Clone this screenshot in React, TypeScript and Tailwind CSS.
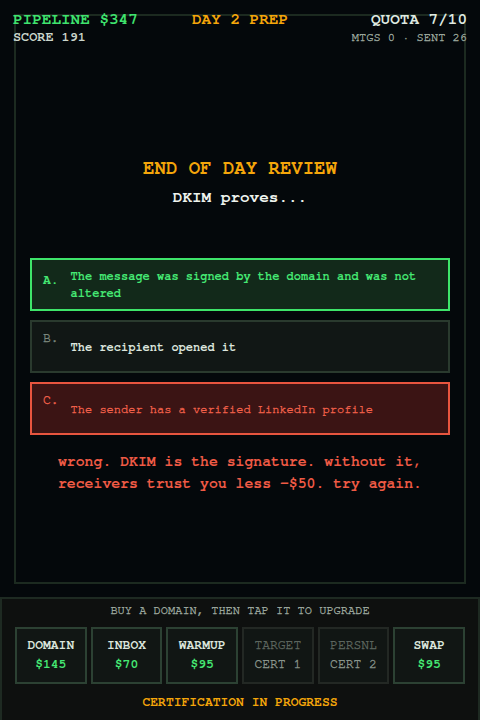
import React from "react";

const mono = "font-['FreeMono','TeX_Gyre_Cursor','Courier_New',monospace]";
const thin = "[-webkit-text-stroke:0.35px_currentColor]";

const options = [
  { key: "A.", text: "The message was signed by the domain and was not altered", state: "right" },
  { key: "B.", text: "The recipient opened it", state: "idle" },
  { key: "C.", text: "The sender has a verified LinkedIn profile", state: "wrong" },
] as const;

const shop = [
  { name: "DOMAIN", price: "$145", locked: false },
  { name: "INBOX", price: "$70", locked: false },
  { name: "WARMUP", price: "$95", locked: false },
  { name: "TARGET", price: "CERT 1", locked: true },
  { name: "PERSNL", price: "CERT 2", locked: true },
  { name: "SWAP", price: "$95", locked: false },
];

export default function App() {
  return (
    <div className={`relative h-[720px] w-[480px] overflow-hidden bg-[#04080b] ${mono}`}>
      {/* HUD */}
      <div className="absolute left-0 right-0 top-0 z-10 px-[13px] pt-[10px]">
        <div className="grid grid-cols-[1fr_auto_1fr] items-center text-[16px] font-bold leading-[18px]">
          <span className="text-[#3fe36e]">PIPELINE $347</span>
          <span className="text-[#f5a60a]">DAY 2 PREP</span>
          <span className="text-right text-[#dfe9e0]">QUOTA 7/10</span>
        </div>
        <div className="mt-[1px] flex items-center justify-between leading-[16px]">
          <span className="text-[13.5px] font-bold text-[#cbd6cc]">SCORE 191</span>
          <span className={`text-[12px] text-[#9aa69c] ${thin}`}>MTGS 0 · SENT 26</span>
        </div>
      </div>

      {/* Main panel */}
      <div className="mx-[14px] mt-[14px] flex h-[570px] flex-col border-2 border-[#1c2a20] px-[14px] pt-[142px]">
        <h1 className="text-center text-[19px] font-bold leading-[22px] text-[#f5a60a]">
          END OF DAY REVIEW
        </h1>
        <p className="mt-[7px] text-center text-[16px] font-bold leading-[20px] text-[#eef3ee]">
          DKIM proves...
        </p>

        <div className="mt-[51px] flex flex-col gap-[9px]">
          {options.map((o) => {
            const box =
              o.state === "right"
                ? "border-[#3ee46a] bg-[#12291a] text-[#45e873]"
                : o.state === "wrong"
                  ? "border-[#e8553f] bg-[#3b1414] text-[#f0604a]"
                  : "border-[#2a3a2e] bg-[#111715] text-[#dde6de]";
            const keyCol =
              o.state === "right"
                ? "text-[#45e873]"
                : o.state === "wrong"
                  ? "text-[#f0604a]"
                  : "text-[#7b877d]";
            return (
              <div
                key={o.key}
                className={`flex h-[53px] gap-[12px] border-2 px-[11px] pt-[7px] ${box}`}
              >
                <span
                  className={`text-[13px] leading-[20px] ${keyCol} ${o.state === "right" ? "mt-[4px] font-bold" : thin}`}
                >
                  {o.key}
                </span>
                <span
                  className={`text-[12px] leading-[17px] ${o.state === "right" ? "mt-[1px]" : "mt-[10px]"} ${o.state === "wrong" ? thin : "font-bold"}`}
                >
                  {o.text}
                </span>
              </div>
            );
          })}
        </div>

        <p className="mt-[16px] text-center text-[14.8px] font-bold leading-[22px] text-[#ef5a45]">
          wrong. DKIM is the signature. without it, receivers trust you less -$50. try again.
        </p>
      </div>

      {/* Shop bar */}
      <div className="mt-[13px] h-[130px] border-2 border-[#1e2a22] bg-[#0e100f] px-[13px] pt-[2px]">
        <p className={`text-center text-[12px] leading-[18px] text-[#9aa59c] ${thin}`}>
          BUY A DOMAIN, THEN TAP IT TO UPGRADE
        </p>
        <div className="mt-[8px] grid grid-cols-6 gap-[4px]">
          {shop.map((s) => (
            <div
              key={s.name}
              className={`flex h-[57px] flex-col items-center justify-center gap-[3px] border-2 bg-[#111614] ${
                s.locked ? "border-[#232824]" : "border-[#2c4133]"
              }`}
            >
              <span
                className={`text-[13px] leading-[16px] ${
                  s.locked ? `text-[#5c655e] ${thin}` : "font-bold text-[#dbe5dc]"
                }`}
              >
                {s.name}
              </span>
              <span
                className={`text-[13px] leading-[16px] ${
                  s.locked ? `text-[#8a958c] ${thin}` : "font-bold text-[#45e873]"
                }`}
              >
                {s.price}
              </span>
            </div>
          ))}
        </div>
        <p className="mt-[11px] text-center text-[13px] font-bold leading-[16px] text-[#f5a60a]">
          CERTIFICATION IN PROGRESS
        </p>
      </div>
    </div>
  );
}
